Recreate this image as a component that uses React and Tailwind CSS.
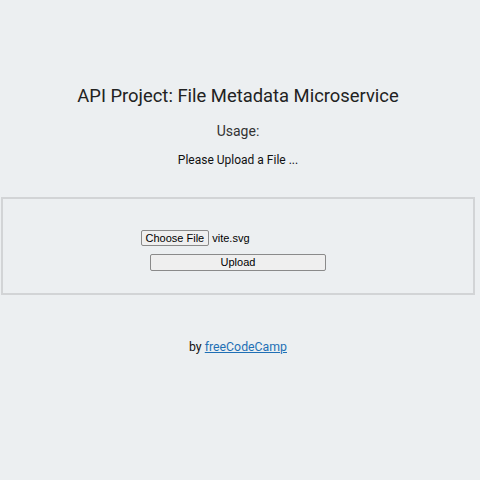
import React, { useState } from "react";

const App = () => {
  const [fileName] = useState("vite.svg");

  return (
    <div className="w-[480px] h-[480px] bg-[#eceff1] font-['Roboto',sans-serif] text-[#222]">
      <div className="w-[476px] flex flex-col items-center">
        <h2 className="mt-[84px] text-[18.4px] leading-[24px] text-[#222]">
          API Project: File Metadata Microservice
        </h2>
        <h3 className="mt-[13px] text-[14px] leading-[20px] text-[#333]">Usage:</h3>
        <p className="mt-[10px] text-[12px] leading-[18px] text-[#111]">Please Upload a File ...</p>
      </div>

      <div className="mt-[28px] ml-[1px] w-[474px] h-[98px] border-2 border-[#d2d4d6] flex flex-col items-center">
        <div className="mt-[31px] flex items-center font-['Liberation_Sans',Arial,sans-serif] text-[11px] text-black ml-[-86px]">
          <button className="h-[16px] px-[4px] bg-[#efefef] border border-[#8a8a8a] rounded-[2px] leading-[14px]">
            Choose File
          </button>
          <span className="ml-[3px] text-[11px]">{fileName}</span>
        </div>
        <button className="mt-[7px] w-[176px] h-[17px] bg-[#efefef] border border-[#8a8a8a] rounded-[2px] font-['Liberation_Sans',Arial,sans-serif] text-[11px] leading-[15px] text-black">
          Upload
        </button>
      </div>

      <p className="mt-[43px] w-[476px] text-center text-[12.3px] text-[#111]">
        by{" "}
        <a href="#" className="text-[#1f6fb5] underline">
          freeCodeCamp
        </a>
      </p>
    </div>
  );
};

export default App;
